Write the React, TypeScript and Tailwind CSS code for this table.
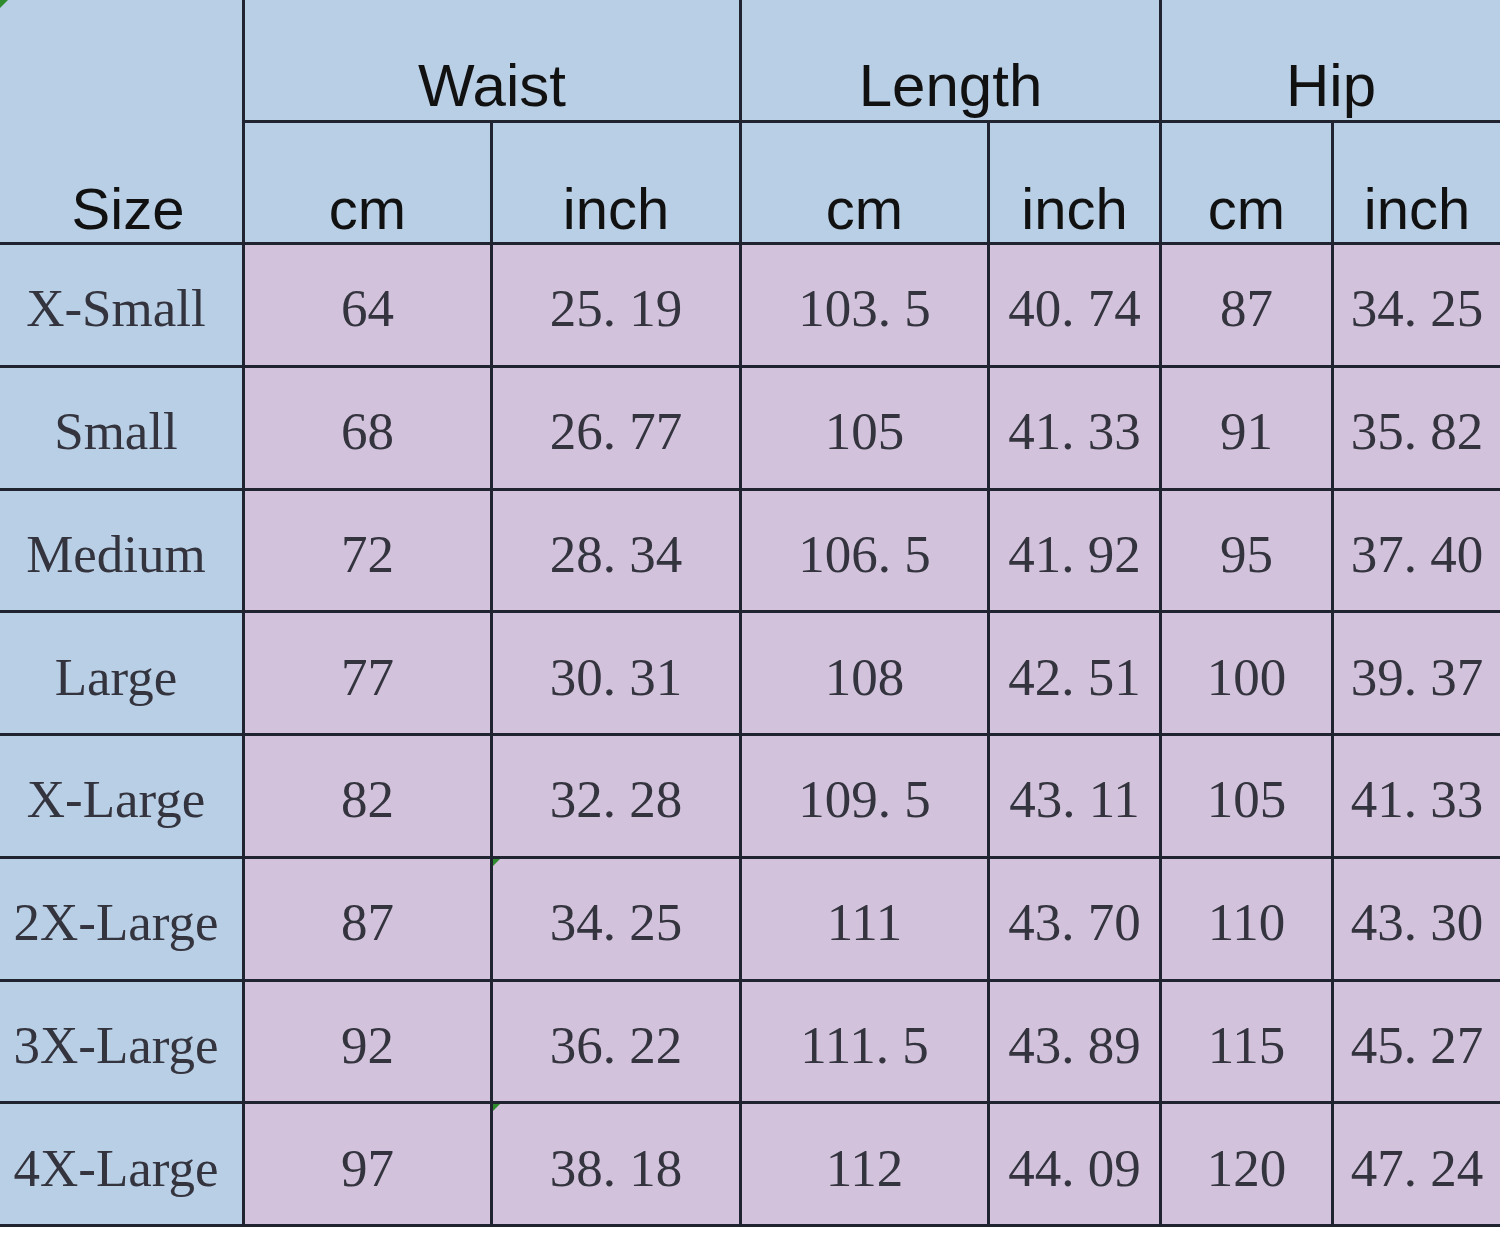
import React from 'react';

const rows = [
    ['X-Small', '64', '25. 19', '103. 5', '40. 74', '87', '34. 25'],
    ['Small', '68', '26. 77', '105', '41. 33', '91', '35. 82'],
    ['Medium', '72', '28. 34', '106. 5', '41. 92', '95', '37. 40'],
    ['Large', '77', '30. 31', '108', '42. 51', '100', '39. 37'],
    ['X-Large', '82', '32. 28', '109. 5', '43. 11', '105', '41. 33'],
    ['2X-Large', '87', '34. 25', '111', '43. 70', '110', '43. 30'],
    ['3X-Large', '92', '36. 22', '111. 5', '43. 89', '115', '45. 27'],
    ['4X-Large', '97', '38. 18', '112', '44. 09', '120', '47. 24'],
];

// excel "number stored as text" markers
const flagged = ['2X-Large', '4X-Large'];

const sans = "font-['Liberation_Sans',Arial,sans-serif]";
const serif = "font-['Liberation_Serif','Times_New_Roman',serif]";

const Marker: React.FC = () => (
    <span className="absolute left-0 top-0 w-0 h-0 border-t-[7px] border-r-[7px] border-t-[#2e8b2e] border-r-transparent" />
);

export default function App() {
    return (
        <div className="w-[1500px] h-[1234px] bg-white">
            <div className="grid grid-cols-[242px_245px_246px_245px_169px_169px_166px] grid-rows-[120px_119px_repeat(8,119.75px)] gap-[3px] bg-[#1f2430] pb-[3px]">
                {/* header */}
                <div className={`relative row-span-2 bg-[#b9cfe6] flex items-end justify-center pb-[4px] text-[58px] leading-none text-[#111] ${sans}`}>
                    <span className="absolute left-0 top-0 w-0 h-0 border-t-[8px] border-r-[8px] border-t-[#2e8b2e] border-r-transparent" />
                    <span className="ml-[14px]">Size</span>
                </div>
                {['Waist', 'Length', 'Hip'].map((h) => (
                    <div
                        key={h}
                        className={`col-span-2 bg-[#b9cfe6] flex items-end justify-center pb-[4px] text-[60px] leading-none text-[#111] ${sans}`}
                    >
                        {h}
                    </div>
                ))}
                {['cm', 'inch', 'cm', 'inch', 'cm', 'inch'].map((u, i) => (
                    <div
                        key={i}
                        className={`bg-[#b9cfe6] flex items-end justify-center pb-[4px] text-[58px] leading-none text-[#111] ${sans}`}
                    >
                        {u}
                    </div>
                ))}

                {/* body */}
                {rows.map((r) => (
                    <React.Fragment key={r[0]}>
                        <div className={`bg-[#b9cfe6] flex items-center justify-center pt-[8px] pr-[10px] text-[53px] leading-none text-[#34343f] ${serif}`}>
                            {r[0]}
                        </div>
                        {r.slice(1).map((v, j) => (
                            <div
                                key={j}
                                className={`relative bg-[#d2c2dc] flex items-center justify-center pt-[8px] text-[53px] leading-none text-[#34343f] ${serif}`}
                            >
                                {j === 1 && flagged.includes(r[0]) && <Marker />}
                                {v}
                            </div>
                        ))}
                    </React.Fragment>
                ))}
            </div>
        </div>
    );
}
